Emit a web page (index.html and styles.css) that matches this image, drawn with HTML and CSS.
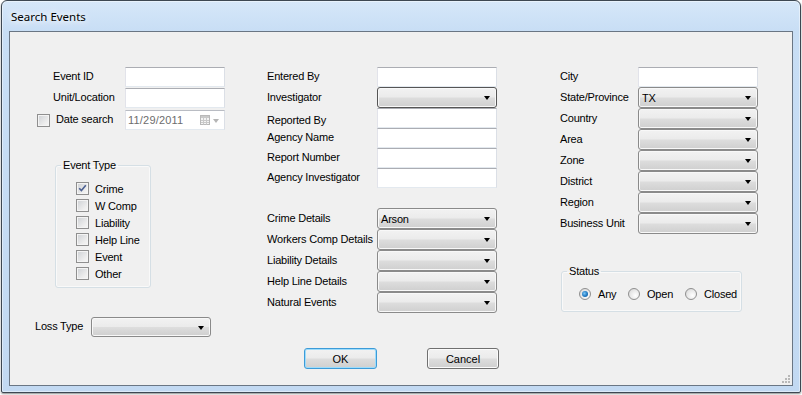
FILE: index.html
```html
<!DOCTYPE html>
<html lang="en">
<head>
  <meta charset="UTF-8" />
  <title>Search Events</title>
  <link rel="stylesheet" href="styles.css">
</head>
<body>
  <div class="window">
    <div class="titlebar"><span class="title">Search Events</span></div>

    <div class="client">
      <div class="columns">

        <!-- left column -->
        <div class="col col-left">
          <div class="row row-first">
            <span class="lbl lbl-left">Event ID</span>
            <input type="text" class="textbox w100">
          </div>
          <div class="row row-unit">
            <span class="lbl lbl-left">Unit/Location</span>
            <input type="text" class="textbox w100">
          </div>
          <div class="row row-date">
            <span class="check check-date"></span>
            <span class="lbl lbl-date">Date search</span>
            <div class="datepicker">
              <span class="date-text">11/29/2011</span>
              <svg class="cal-icon" width="10" height="10" viewBox="0 0 10 10">
                <rect x="0.5" y="0.5" width="9" height="9" fill="#f4f4f4" stroke="#b9b9b9"/>
                <rect x="1" y="1" width="8" height="2" fill="#c9c9c9"/>
                <path d="M1 5.5H9M1 7.5H9M3.5 3V9.5M6.5 3V9.5" stroke="#c9c9c9" stroke-width="1"/>
              </svg>
              <span class="arrow arrow-grey"></span>
            </div>
          </div>

          <fieldset class="group group-type">
            <legend>Event Type</legend>
            <div class="check-list">
              <div class="check-row"><span class="check checked"><svg width="11" height="11" viewBox="0 0 11 11"><path d="M2.2 5.2L4.4 7.6L8.8 2.2" fill="none" stroke="#4d6192" stroke-width="1.6"/></svg></span><span>Crime</span></div>
              <div class="check-row"><span class="check"></span><span>W Comp</span></div>
              <div class="check-row"><span class="check"></span><span>Liability</span></div>
              <div class="check-row"><span class="check"></span><span>Help Line</span></div>
              <div class="check-row"><span class="check"></span><span>Event</span></div>
              <div class="check-row"><span class="check"></span><span>Other</span></div>
            </div>
          </fieldset>

          <div class="row row-loss">
            <span class="lbl lbl-loss">Loss Type</span>
            <div class="combo"><span></span><span class="arrow"></span></div>
          </div>
        </div>

        <!-- middle column -->
        <div class="col col-mid">
          <div class="row row-text">
            <span class="lbl lbl-mid">Entered By</span>
            <input type="text" class="textbox">
          </div>
          <div class="row row-combo">
            <span class="lbl lbl-mid">Investigator</span>
            <div class="combo combo-dark"><span></span><span class="arrow"></span></div>
          </div>
          <div class="row row-text">
            <span class="lbl lbl-mid lbl-low">Reported By</span>
            <input type="text" class="textbox">
          </div>
          <div class="row row-text">
            <span class="lbl lbl-mid">Agency Name</span>
            <input type="text" class="textbox">
          </div>
          <div class="row row-text">
            <span class="lbl lbl-mid">Report Number</span>
            <input type="text" class="textbox">
          </div>
          <div class="row row-text">
            <span class="lbl lbl-mid">Agency Investigator</span>
            <input type="text" class="textbox">
          </div>

          <div class="details">
            <div class="row row-combo">
              <span class="lbl lbl-mid">Crime Details</span>
              <div class="combo"><span>Arson</span><span class="arrow"></span></div>
            </div>
            <div class="row row-combo">
              <span class="lbl lbl-mid">Workers Comp Details</span>
              <div class="combo"><span></span><span class="arrow"></span></div>
            </div>
            <div class="row row-combo">
              <span class="lbl lbl-mid">Liability Details</span>
              <div class="combo"><span></span><span class="arrow"></span></div>
            </div>
            <div class="row row-combo">
              <span class="lbl lbl-mid">Help Line Details</span>
              <div class="combo"><span></span><span class="arrow"></span></div>
            </div>
            <div class="row row-combo">
              <span class="lbl lbl-mid">Natural Events</span>
              <div class="combo"><span></span><span class="arrow"></span></div>
            </div>
          </div>
        </div>

        <!-- right column -->
        <div class="col col-right">
          <div class="row row-text">
            <span class="lbl lbl-right">City</span>
            <input type="text" class="textbox">
          </div>
          <div class="row row-combo">
            <span class="lbl lbl-right">State/Province</span>
            <div class="combo"><span>TX</span><span class="arrow"></span></div>
          </div>
          <div class="row row-combo">
            <span class="lbl lbl-right">Country</span>
            <div class="combo"><span></span><span class="arrow"></span></div>
          </div>
          <div class="row row-combo">
            <span class="lbl lbl-right">Area</span>
            <div class="combo"><span></span><span class="arrow"></span></div>
          </div>
          <div class="row row-combo">
            <span class="lbl lbl-right">Zone</span>
            <div class="combo"><span></span><span class="arrow"></span></div>
          </div>
          <div class="row row-combo">
            <span class="lbl lbl-right">District</span>
            <div class="combo"><span></span><span class="arrow"></span></div>
          </div>
          <div class="row row-combo">
            <span class="lbl lbl-right">Region</span>
            <div class="combo"><span></span><span class="arrow"></span></div>
          </div>
          <div class="row row-combo">
            <span class="lbl lbl-right">Business Unit</span>
            <div class="combo"><span></span><span class="arrow"></span></div>
          </div>

          <fieldset class="group group-status">
            <legend>Status</legend>
            <div class="radios">
              <div class="radio-item item-any"><span class="radio selected"></span><span>Any</span></div>
              <div class="radio-item item-open"><span class="radio"></span><span>Open</span></div>
              <div class="radio-item"><span class="radio"></span><span>Closed</span></div>
            </div>
          </fieldset>
        </div>
      </div>

      <div class="buttons">
        <button class="btn btn-default">OK</button>
        <button class="btn btn-cancel">Cancel</button>
      </div>

      <svg class="grip" width="10" height="10" viewBox="0 0 10 10">
        <g fill="#b8b8b8">
          <rect x="7" y="1" width="2" height="2"/>
          <rect x="4" y="4" width="2" height="2"/>
          <rect x="7" y="4" width="2" height="2"/>
          <rect x="1" y="7" width="2" height="2"/>
          <rect x="4" y="7" width="2" height="2"/>
          <rect x="7" y="7" width="2" height="2"/>
        </g>
      </svg>
    </div>
  </div>
</body>
</html>
```

FILE: styles.css
```css
html, body {
  margin: 0;
  padding: 0;
  background-color: #ffffff;
}

body {
  width: 802px;
  height: 395px;
  overflow: hidden;
  font-family: "Liberation Sans", Arial, sans-serif;
  font-size: 11px;
  letter-spacing: -0.2px;
  color: #000;
}

/* window frame */
.window {
  box-sizing: border-box;
  width: 800px;
  height: 393px;
  margin-left: 1px;
  border: 1px solid #3d4752;
  border-radius: 6px 6px 2px 2px;
  padding: 0 7px 6px 7px;
  background: linear-gradient(to bottom, #d6e7f9 0px, #c8def5 30px, #c2d9f2 100%);
  box-shadow: inset 0 0 0 1px rgba(255, 255, 255, 0.45), 0 1px 2px rgba(0, 0, 0, 0.45);
}

.titlebar {
  height: 30px;
  display: flex;
  align-items: center;
  padding-top: 1px;
  box-sizing: border-box;
}

.title {
  margin-left: 2px;
  font-family: "Noto Sans", "Liberation Sans", sans-serif;
  font-size: 11.5px;
  letter-spacing: 0;
  color: #000;
  text-shadow: 0 0 6px #fff, 0 0 10px #fff, 0 0 14px #fff;
}

.client {
  position: relative;
  box-sizing: border-box;
  height: 355px;
  border: 1px solid #6a7684;
  background-color: #f0f0f0;
}

.columns {
  display: flex;
  align-items: flex-start;
  padding: 35px 0 0 25px;
}

.col {
  display: flex;
  flex-direction: column;
}

.col-left {
  width: 190px;
}

.col-mid {
  width: 230px;
  margin-left: 42px;
}

.col-right {
  width: 198px;
  margin-left: 63px;
}

.row {
  display: flex;
  align-items: center;
}

.row-first {
  height: 20px;
  margin-bottom: 1px;
}

.row-unit {
  height: 20px;
  margin-bottom: 2px;
}

.row-date {
  height: 20px;
}

.row-text {
  height: 20px;
}

.row-combo {
  height: 21px;
}

.row-loss {
  height: 20px;
  margin-top: 29px;
}

.lbl {
  white-space: nowrap;
  padding-bottom: 2px;
}

.lbl-left {
  width: 72px;
  margin-left: 18px;
}

.lbl-date {
  width: 69px;
  margin-left: 6px;
}

.lbl-loss {
  width: 56px;
}

.lbl-mid {
  width: 110px;
}

.lbl-right {
  width: 78px;
}

.lbl-low {
  padding-top: 4px;
  padding-bottom: 0;
}

.details {
  margin-top: 20px;
}

/* text boxes */
.textbox {
  box-sizing: border-box;
  width: 120px;
  height: 20px;
  margin: 0;
  padding: 0 3px;
  border: 1px solid;
  border-color: #abadb3 #dbdfe6 #e3e9ef #e2e3ea;
  background-color: #fff;
  font: inherit;
  outline: none;
}

.textbox.w100 {
  width: 100px;
}

/* combo boxes */
.combo {
  box-sizing: border-box;
  width: 120px;
  height: 21px;
  border: 1px solid #8a8a8a;
  border-radius: 3px;
  background: linear-gradient(to bottom, #f2f2f2 0%, #ebebeb 48%, #dddddd 52%, #cfcfcf 100%);
  box-shadow: inset 0 0 0 1px #f8f8f8;
  display: flex;
  align-items: center;
  justify-content: space-between;
  padding: 0 6px 0 3px;
}

.row-loss .combo {
  height: 20px;
}

.combo-dark {
  border-color: #555;
}

.arrow {
  width: 0;
  height: 0;
  border-left: 3.5px solid transparent;
  border-right: 3.5px solid transparent;
  border-top: 4px solid #000;
  margin-top: 1px;
}

.arrow-grey {
  border-top-color: #b5b5b5;
  margin-left: 3px;
}

/* date picker */
.datepicker {
  box-sizing: border-box;
  width: 100px;
  height: 20px;
  border: 1px solid;
  border-color: #b9bcc3 #dbdfe6 #e3e9ef #e2e3ea;
  background-color: #fff;
  display: flex;
  align-items: center;
  padding: 0 5px 0 2px;
}

.date-text {
  color: #6d6d6d;
  letter-spacing: 0.2px;
  flex: 1;
}

.cal-icon {
  display: block;
}

/* check boxes */
.check {
  box-sizing: border-box;
  width: 13px;
  height: 13px;
  border: 1px solid #8f8f8f;
  background: linear-gradient(135deg, #cdd0d4 0%, #eeeeee 70%, #f6f6f6 100%);
  box-shadow: inset 0 0 0 1px #f4f4f4;
  display: flex;
  align-items: center;
  justify-content: center;
  flex: none;
}

.check-date {
  margin-left: 2px;
}

.check svg {
  display: block;
}

/* group boxes */
.group {
  box-sizing: border-box;
  margin: 0;
  padding: 0;
  border: 1px solid #d5dfe5;
  border-radius: 3px;
  box-shadow: inset 0 0 0 1px rgba(255, 255, 255, 0.6);
  min-width: 0;
}

.group legend {
  padding: 0 2px;
  line-height: 14px;
}

.group-type {
  width: 96px;
  height: 130px;
  margin: 28px 0 0 20px;
}

.group-type legend {
  margin-left: 5px;
}

.check-list {
  padding: 8px 0 0 20px;
}

.check-row {
  height: 17px;
  display: flex;
  align-items: center;
}

.check-row .check {
  margin-right: 6px;
}

.group-status {
  width: 181px;
  height: 48px;
  margin: 30px 0 0 1px;
}

.group-status legend {
  margin-left: 5px;
}

.radios {
  display: flex;
  height: 16px;
  align-items: center;
  padding: 8px 0 0 17px;
}

.radio-item {
  display: flex;
  align-items: center;
}

.item-any {
  width: 49px;
}

.item-open {
  width: 57px;
}

.radio {
  box-sizing: border-box;
  width: 12px;
  height: 12px;
  border: 1px solid #8f8f8f;
  border-radius: 50%;
  background: radial-gradient(circle at 65% 65%, #ffffff 0%, #e6e6e6 60%, #cfcfcf 100%);
  margin-right: 7px;
  display: flex;
  align-items: center;
  justify-content: center;
}

.radio.selected::after {
  content: "";
  width: 6px;
  height: 6px;
  border-radius: 50%;
  background: radial-gradient(circle at 40% 40%, #7cc7f5 0%, #1f78c1 55%, #0d4f8b 100%);
}

/* buttons */
.buttons {
  display: flex;
  margin: 11px 0 0 294px;
}

.btn {
  box-sizing: border-box;
  height: 21px;
  margin: 0;
  padding: 0;
  border: 1px solid #707070;
  border-radius: 3px;
  background: linear-gradient(to bottom, #f2f2f2 0%, #ebebeb 48%, #dddddd 52%, #cfcfcf 100%);
  box-shadow: inset 0 0 0 1px #fbfbfb;
  font: inherit;
  color: #000;
}

.btn-default {
  width: 73px;
  border-color: #3c9bd8;
  box-shadow: inset 0 0 0 1px #9edcfb;
}

.btn-cancel {
  width: 72px;
  margin-left: 50px;
}

.grip {
  position: absolute;
  right: 1px;
  bottom: 1px;
}
```
